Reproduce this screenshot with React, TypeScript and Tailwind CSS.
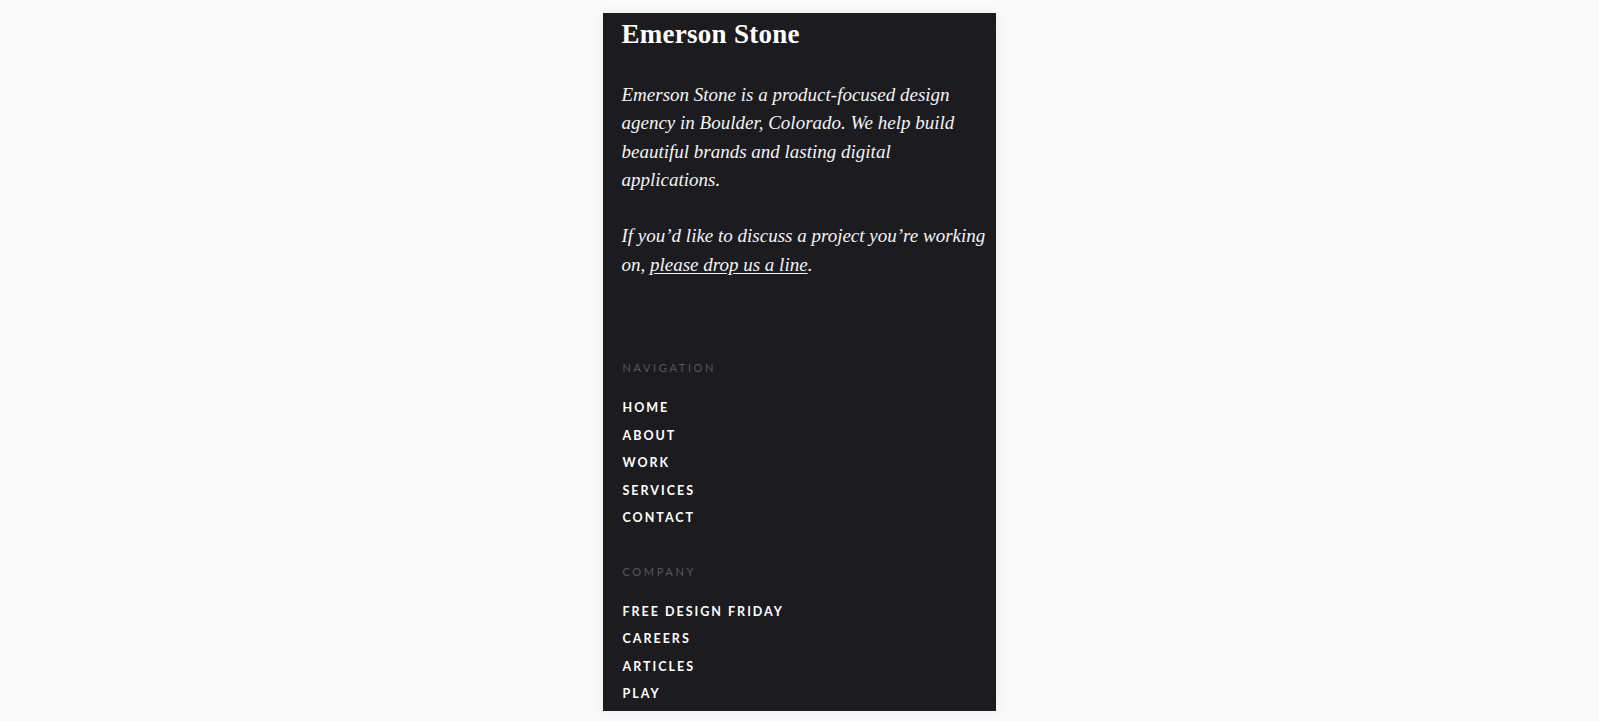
import React from "react";

const navItems = ["HOME", "ABOUT", "WORK", "SERVICES", "CONTACT"];
const companyItems = ["FREE DESIGN FRIDAY", "CAREERS", "ARTICLES", "PLAY"];

function Section({ label, items, className }: { label: string; items: string[]; className?: string }) {
  return (
    <div className={className}>
      <div className="pl-px font-['Lato','Open_Sans',sans-serif] text-[11px] leading-[16px] tracking-[0.24em] text-[#57565e]">
        {label}
      </div>
      <ul className="mt-[18px] flex flex-col">
        {items.map((it) => (
          <li
            key={it}
            className="pl-px font-['Lato','Open_Sans',sans-serif] text-[12.5px] font-bold leading-[27.5px] tracking-[0.16em] text-white"
          >
            {it}
          </li>
        ))}
      </ul>
    </div>
  );
}

export default function App() {
  return (
    <div className="min-h-screen bg-[#fafafa] pt-[13px]">
      <div className="mx-auto w-[394px] border-r border-b border-[#f2f2f2] bg-[#1c1b20] pl-[19px] pr-[6px] pt-[8px] pb-[3px] shadow-[0_0_12px_rgba(0,0,0,0.06)]">
        <h1 className="font-['Liberation_Serif',serif] text-[27px] font-bold leading-[27px] tracking-[0.01em] text-white">
          Emerson Stone
        </h1>
        <div className="mt-[33px] font-['Liberation_Serif',serif] text-[19px] italic leading-[28.3px] text-[#f4f4f4]">
          <p className="pr-[10px]">
            Emerson Stone is a product-focused design agency in Boulder, Colorado. We help build beautiful brands and
            lasting digital applications.
          </p>
          <p className="mt-[28.3px]">
            If you’d like to discuss a project you’re working on,{" "}
            <a href="#" className="underline underline-offset-2">
              please drop us a line
            </a>
            .
          </p>
        </div>
        <Section label="NAVIGATION" items={navItems} className="mt-[81px]" />
        <Section label="COMPANY" items={companyItems} className="mt-[32px]" />
      </div>
    </div>
  );
}
